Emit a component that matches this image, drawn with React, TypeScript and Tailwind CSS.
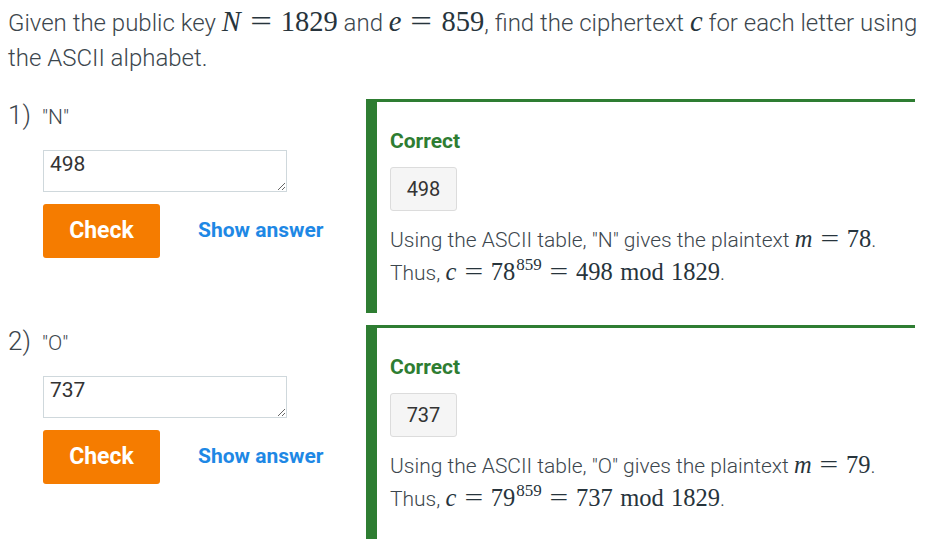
import React from 'react';

const font = { fontFamily: 'Roboto, "Liberation Sans", sans-serif' };

// KaTeX-like inline math
const M = ({ children, size }: { children: React.ReactNode; size: string }) => (
	<span className={`${size} text-[#27343c] whitespace-nowrap`} style={{ fontFamily: '"Liberation Serif", "DejaVu Serif", serif' }}>
		{children}
	</span>
);
const V = ({ children }: { children: React.ReactNode }) => <i className="font-normal">{children}</i>;
const Eq = () => <span className="inline-block mx-[0.42em] scale-x-[1.35]">=</span>;

const items = [
	{ n: 1, letter: 'N', m: 78, c: 498 },
	{ n: 2, letter: 'O', m: 79, c: 737 },
];

const Item = ({ n, letter, m, c }) => (
	<div className="flex">
		<div className="w-[358px] shrink-0">
			<div className="flex items-baseline leading-[30px] pt-[1px]">
				<span className="text-[26px] font-light w-[34px]">{n})</span>
				<span className="text-[21px] font-light">"{letter}"</span>
			</div>
			<div className="pl-[35px] pt-[18px]">
				<textarea
					defaultValue={String(c)}
					className="block w-[244px] h-[42px] border border-[#cfd8dc] px-[6px] py-0 text-[21px] leading-[26px] text-[#333] font-normal outline-none"
					style={font}
				/>
				<div className="flex items-center mt-[12px]">
					<button className="w-[117px] h-[54px] rounded-[3px] bg-[#f57c00] text-white text-[23px] font-bold">Check</button>
					<span className="ml-[38px] text-[#1e88e5] text-[21px] font-bold">Show answer</span>
				</div>
			</div>
		</div>
		<div className="flex-1 h-[214px] border-l-[11px] border-t-[3px] border-[#2e7d32] pl-[13px] pt-[26px]">
			<div className="text-[21px] font-bold text-[#2e7d32] leading-[26px]">Correct</div>
			<div className="mt-[13px] inline-flex items-center justify-center w-[67px] h-[44px] bg-[#f5f5f5] border border-[#dcdcdc] rounded-[3px] text-[20px] text-[#333]">
				{c}
			</div>
			<div className="mt-[12px] text-[21px] font-light leading-[31px]">
				Using the ASCII table, "{letter}" gives the plaintext{' '}
				<M size="text-[24.5px]">
					<V>m</V>
					<Eq />
					{m}
				</M>
				.
				<br />
				Thus,{' '}
				<M size="text-[24.5px]">
					<V>c</V>
					<Eq />
					{m}
					<sup className="text-[17px] -top-[0.6em] ml-[1px]">859</sup>
					<Eq />
					{c}
					<span className="mx-[0.3em]">mod</span>
					1829
				</M>
				.
			</div>
		</div>
	</div>
);

export default function App() {
	return (
		<div className="w-[936px] h-[541px] overflow-hidden bg-white text-[#3c464d] pl-[8px] pr-[21px]" style={font}>
			<p className="w-[926px] text-[24px] font-light leading-[35px] pt-[4px]">
				Given the public key{' '}
				<M size="text-[28.5px]">
					<V>N</V>
					<Eq />
					1829
				</M>{' '}
				and{' '}
				<M size="text-[28.5px]">
					<V>e</V>
					<Eq />
					859
				</M>
				, find the ciphertext{' '}
				<M size="text-[28.5px]">
					<V>c</V>
				</M>{' '}
				for each letter using the ASCII alphabet.
			</p>
			<div className="mt-[23px] flex flex-col gap-[12px]">
				{items.map((it) => (
					<Item key={it.n} {...it} />
				))}
			</div>
		</div>
	);
}
